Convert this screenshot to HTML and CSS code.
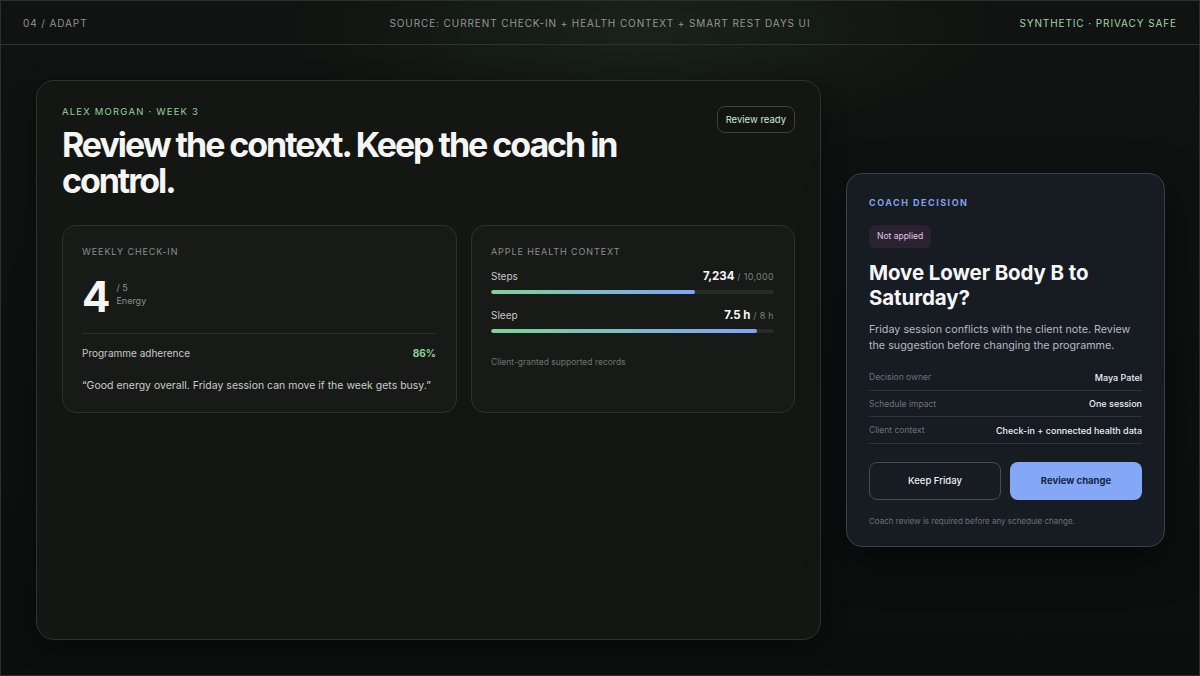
FILE: index.html
```html
<!DOCTYPE html>
<html lang="en">
<head>
  <meta charset="UTF-8" />
  <meta name="viewport" content="width=device-width, initial-scale=1.0" />
  <title>Adapt - Coach Review</title>
  <link rel="stylesheet" href="styles.css">
</head>
<body>
  <div class="frame">
    <header class="topbar">
      <span class="crumb">04 / ADAPT</span>
      <span class="source">SOURCE: CURRENT CHECK-IN + HEALTH CONTEXT + SMART REST DAYS UI</span>
      <span class="safe">SYNTHETIC · PRIVACY SAFE</span>
    </header>

    <main class="stage">
      <section class="main-card">
        <div class="main-head">
          <div>
            <p class="eyebrow">ALEX MORGAN · WEEK 3</p>
            <h1>Review the context. Keep the coach in control.</h1>
          </div>
          <span class="status-pill">Review ready</span>
        </div>

        <div class="panels">
          <div class="panel">
            <p class="panel-label">WEEKLY CHECK-IN</p>
            <div class="score">
              <span class="score-num">4</span>
              <span class="score-meta">/ 5<br>Energy</span>
            </div>
            <div class="adherence">
              <span>Programme adherence</span>
              <strong>86%</strong>
            </div>
            <p class="quote">“Good energy overall. Friday session can move if the week gets busy.”</p>
          </div>

          <div class="panel">
            <p class="panel-label">APPLE HEALTH CONTEXT</p>
            <div class="metric">
              <div class="metric-row">
                <span>Steps</span>
                <span><b>7,234</b> <small>/ 10,000</small></span>
              </div>
              <div class="track"><div class="fill" style="width: 72%"></div></div>
            </div>
            <div class="metric">
              <div class="metric-row">
                <span>Sleep</span>
                <span><b>7.5 h</b> <small>/ 8 h</small></span>
              </div>
              <div class="track"><div class="fill" style="width: 94%"></div></div>
            </div>
            <p class="note">Client-granted supported records</p>
          </div>
        </div>
      </section>

      <aside class="decision">
        <p class="decision-label">COACH DECISION</p>
        <span class="tag">Not applied</span>
        <h2>Move Lower Body B to Saturday?</h2>
        <p class="desc">Friday session conflicts with the client note. Review the suggestion before changing the programme.</p>
        <dl class="facts">
          <div class="fact"><dt>Decision owner</dt><dd>Maya Patel</dd></div>
          <div class="fact"><dt>Schedule impact</dt><dd>One session</dd></div>
          <div class="fact"><dt>Client context</dt><dd>Check-in + connected health data</dd></div>
        </dl>
        <div class="actions">
          <button class="btn btn-ghost">Keep Friday</button>
          <button class="btn btn-primary">Review change</button>
        </div>
        <p class="fine">Coach review is required before any schedule change.</p>
      </aside>
    </main>
  </div>
</body>
</html>
```

FILE: styles.css
```css
* { box-sizing: border-box; }

html, body {
  margin: 0;
  height: 100%;
}

body {
  font-family: Inter, "Noto Sans", sans-serif;
  color: #f2f3f1;
  background: #0c0e0d;
}

.frame {
  width: 1200px;
  height: 676px;
  border: 1px solid #2c302d;
  background:
    radial-gradient(ellipse 520px 160px at 640px 30px, rgba(60, 90, 60, 0.22), transparent 70%),
    linear-gradient(180deg, #101311 0%, #0c0e0d 100%);
  display: flex;
  flex-direction: column;
}

.topbar {
  height: 44px;
  flex: none;
  display: grid;
  grid-template-columns: 1fr auto 1fr;
  align-items: center;
  padding: 0 22px;
  border-bottom: 1px solid #2e332f;
  font-size: 10px;
  letter-spacing: 0.9px;
}
.crumb { color: #8e928f; }
.source { color: #939793; }
.safe {
  color: #9fd6a8;
  text-align: right;
}

.stage {
  flex: 1;
  display: flex;
  align-items: center;
  gap: 25px;
  padding: 0 35px;
}

.main-card {
  width: 785px;
  height: 560px;
  flex: none;
  background: #141614;
  border: 1px solid #2f3330;
  border-radius: 18px;
  padding: 25px;
  box-shadow: 0 8px 24px rgba(0, 0, 0, 0.35);
}

.main-head {
  display: flex;
  justify-content: space-between;
  align-items: flex-start;
}

.eyebrow {
  margin: 0 0 10px;
  font-size: 9.5px;
  letter-spacing: 1.2px;
  color: #8fd29c;
}

h1 {
  margin: 0;
  width: 580px;
  font-size: 34px;
  line-height: 36px;
  font-weight: 700;
  letter-spacing: -2.05px;
  color: #f5f6f3;
}

.status-pill {
  margin-top: 0;
  padding: 7px 8px;
  border: 1px solid #3d433e;
  border-radius: 8px;
  font-size: 9.5px;
  color: #cfe6d3;
  background: #121412;
}

.panels {
  display: grid;
  grid-template-columns: 395px 1fr;
  gap: 14px;
  margin-top: 26px;
}

.panel {
  height: 188px;
  background: #181a18;
  border: 1px solid #2d312e;
  border-radius: 14px;
  padding: 20px 20px 20px 19px;
}

.panel-label {
  margin: 0;
  font-size: 9px;
  letter-spacing: 0.9px;
  color: #8a8e8b;
}

.score {
  display: flex;
  align-items: flex-start;
  gap: 6px;
  margin-top: 19px;
  height: 44px;
}
.score-num {
  font-size: 42px;
  line-height: 42px;
  font-weight: 700;
  color: #f5f6f3;
}
.score-meta {
  font-size: 9px;
  line-height: 13px;
  color: #8c908d;
  margin-top: 5px;
}

.adherence {
  display: flex;
  justify-content: space-between;
  align-items: center;
  border-top: 1px solid #2d312e;
  margin-top: 13px;
  padding-top: 13px;
  font-size: 10px;
  color: #c6c9c6;
}
.adherence strong {
  color: #8fd29c;
  font-weight: 700;
}

.quote {
  margin: 20px 0 0;
  font-size: 10.5px;
  color: #c9ccc9;
}

.metric { margin-top: 12px; }
.metric + .metric { margin-top: 14px; }

.metric-row {
  display: flex;
  justify-content: space-between;
  align-items: baseline;
  font-size: 10px;
  color: #c6c9c6;
}
.metric-row b {
  font-size: 11.5px;
  color: #f5f6f3;
}
.metric-row small {
  font-size: 9px;
  color: #7c807d;
  letter-spacing: 0.3px;
}

.track {
  height: 4px;
  margin-top: 7px;
  border-radius: 2px;
  background: #272a28;
  overflow: hidden;
}
.fill {
  height: 100%;
  border-radius: 2px;
  background: linear-gradient(90deg, #7fd396, #7fa5f6);
}

.note {
  margin: 24px 0 0;
  font-size: 8.5px;
  color: #6f7370;
}

.decision {
  width: 319px;
  flex: none;
  background: #171b22;
  border: 1px solid #3a404b;
  border-radius: 16px;
  padding: 23px 22px 20px;
  box-shadow: 0 14px 40px rgba(0, 0, 0, 0.5);
}

.decision-label {
  margin: 0;
  font-size: 9px;
  font-weight: 700;
  letter-spacing: 1.5px;
  color: #7fa3e8;
}

.tag {
  display: inline-block;
  margin-top: 17px;
  padding: 6px 8px 7px;
  border-radius: 6px;
  background: #2a2230;
  color: #e3c7e6;
  font-size: 8.5px;
}

h2 {
  margin: 12px 0 0;
  font-size: 20.5px;
  line-height: 25px;
  font-weight: 700;
  letter-spacing: -0.1px;
  color: #f5f6f8;
}

.desc {
  margin: 12px 0 0;
  font-size: 10.75px;
  line-height: 16px;
  color: #b6bac2;
}

.facts {
  margin: 10px 0 0;
}
.fact {
  display: flex;
  justify-content: space-between;
  align-items: center;
  height: 26.5px;
  border-bottom: 1px solid #2e333c;
  font-size: 8.5px;
}
.fact dt { color: #6d727b; }
.fact dd {
  margin: 0;
  font-size: 9px;
  color: #eef0f4;
  font-weight: 500;
}

.actions {
  display: grid;
  grid-template-columns: 1fr 1fr;
  gap: 9px;
  margin-top: 18px;
}

.btn {
  height: 38px;
  border-radius: 8px;
  font-family: inherit;
  font-size: 9.5px;
  font-weight: 500;
  cursor: pointer;
}
.btn-ghost {
  background: transparent;
  border: 1px solid #464c56;
  color: #eef0f4;
}
.btn-primary {
  background: #84a8f6;
  border: none;
  color: #16264a;
  font-weight: 700;
}

.fine {
  margin: 16px 0 0;
  font-size: 8px;
  color: #6d727b;
}
```
